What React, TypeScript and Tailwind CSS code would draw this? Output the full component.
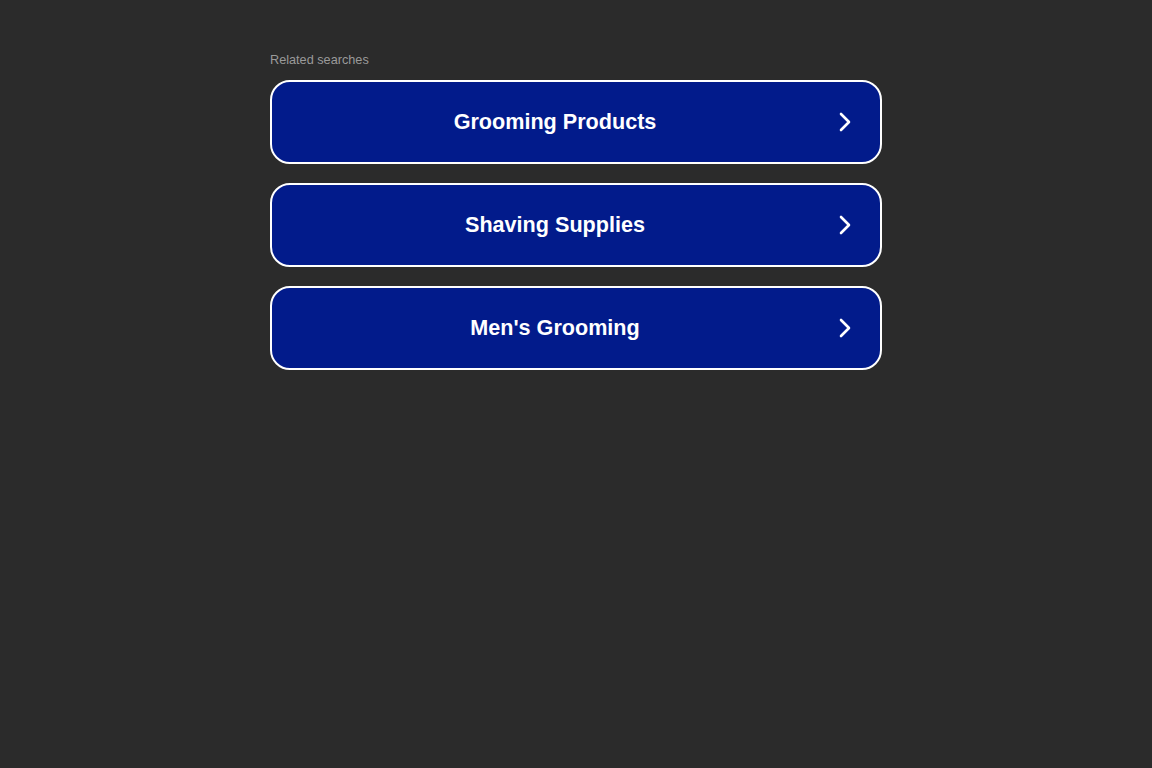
const items = ["Grooming Products", "Shaving Supplies", "Men's Grooming"];

function Chevron() {
  return (
    <svg width="14" height="22" viewBox="0 0 14 22" fill="none" className="shrink-0">
      <path d="M3 3l8 8-8 8" stroke="white" strokeWidth="2.6" strokeLinecap="round" strokeLinejoin="round" />
    </svg>
  );
}

export default function App() {
  return (
    <div className="min-h-screen w-full bg-[#2b2b2b] font-['Liberation_Sans',Arial,sans-serif]">
      <div className="mx-auto w-[612px] pt-[52px]">
        <div className="text-[12.7px] leading-[16px] text-[#9a9a9a]">Related searches</div>
        <div className="mt-[12px] flex flex-col gap-[19px]">
          {items.map((t) => (
            <a
              key={t}
              href="#"
              className="flex h-[84px] items-center rounded-[20px] border-2 border-white bg-[#021b8b] pr-[28px]"
            >
              <span className="flex-1 text-center text-[21.6px] font-bold text-white">{t}</span>
              <Chevron />
            </a>
          ))}
        </div>
      </div>
    </div>
  );
}
